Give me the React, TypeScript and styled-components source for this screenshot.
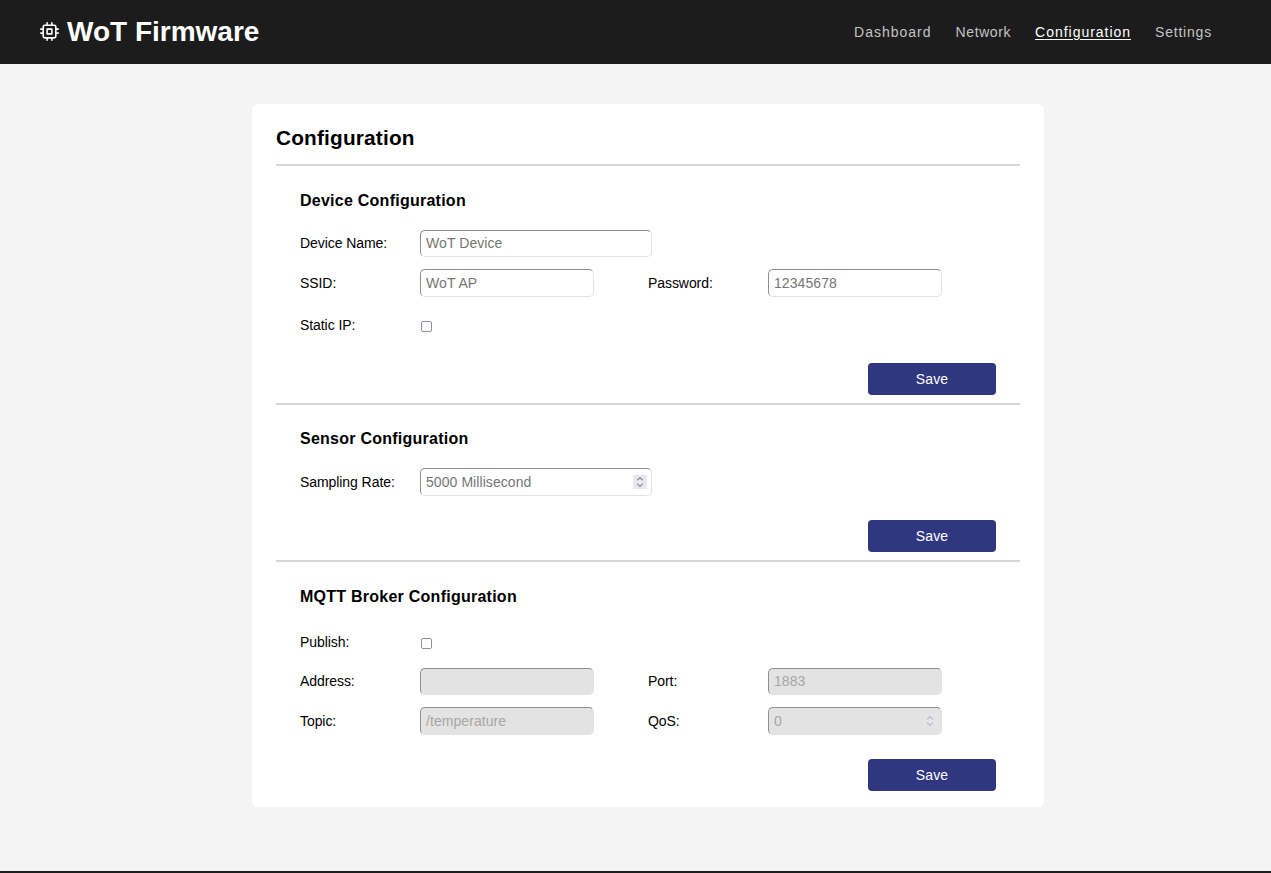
import React from "react";
import styled, { createGlobalStyle } from "styled-components";
import { FiCpu } from "react-icons/fi";

const GlobalStyle = createGlobalStyle`
  * { box-sizing: border-box; }
  body {
    margin: 0;
    background: #f4f4f4;
    font-family: "Liberation Sans", Arial, sans-serif;
    color: #000;
  }
`;

const Page = styled.div`
  height: 873px;
  overflow: hidden;
  display: flex;
  flex-direction: column;
`;

const Header = styled.header`
  height: 64px;
  flex: none;
  display: flex;
  align-items: center;
  justify-content: space-between;
  padding: 0 59px 0 40px;
  background: #1c1c1c;
  color: #fff;
`;

const Brand = styled.div`
  display: flex;
  align-items: center;
  gap: 8px;
  font-size: 28px;
  font-weight: 700;
  line-height: 32px;

  svg {
    margin-bottom: 1px;
  }
`;

const Nav = styled.nav`
  display: flex;
  gap: 24px;
`;

const NavLink = styled.a<{ $active?: boolean; $tracking: number }>`
  font-size: 14px;
  letter-spacing: ${(p) => p.$tracking}px;
  line-height: 17px;
  color: ${(p) => (p.$active ? "#fff" : "#c4c4c4")};
  text-decoration: ${(p) => (p.$active ? "underline" : "none")};
  text-underline-offset: 2px;
`;

const Card = styled.main`
  width: 792px;
  height: 703px;
  flex: none;
  margin: 40px 0 64px 252px;
  padding: 0 24px;
  border-radius: 6px;
  background: #fff;
`;

const Title = styled.h1`
  margin: 0;
  height: 60px;
  padding-top: 21px;
  font-size: 20.8px;
  letter-spacing: 0.18px;
  line-height: 26px;
`;

const Section = styled.section<{ $height: number }>`
  height: ${(p) => p.$height}px;
  padding: 24px 24px 0;
  border-top: 2px solid #d6d6d6;
  display: flex;
  flex-direction: column;
`;

const Heading = styled.h2<{ $drop?: number }>`
  margin: 0;
  height: 20px;
  padding-top: ${(p) => p.$drop ?? 0}px;
  font-size: 16px;
  letter-spacing: 0.25px;
  line-height: 20px;
`;

const Row = styled.div<{ $top: number; $height?: number }>`
  display: flex;
  align-items: center;
  flex: none;
  height: ${(p) => p.$height ?? 28}px;
  margin-top: ${(p) => p.$top}px;
`;

const Field = styled.label`
  display: flex;
  align-items: center;
  width: 348px;
  height: 100%;
  font-size: 14px;
  line-height: 17px;
`;

const Label = styled.span`
  width: 120px;
  flex: none;
  letter-spacing: -0.07px;
`;

const Box = styled.span<{ $wide?: boolean; $disabled?: boolean }>`
  display: flex;
  align-items: center;
  flex: none;
  width: ${(p) => (p.$wide ? 232 : 174)}px;
  height: 100%;
  padding: 0 4px 0 5px;
  border: 1px solid;
  border-color: #8f8f8f #e3e3e3 #e3e3e3 #8f8f8f;
  border-radius: 5px;
  background: ${(p) => (p.$disabled ? "#e3e3e3" : "#fff")};
  --hint: ${(p) => (p.$disabled ? "#a6a6a6" : "#757575")};
`;

const Input = styled.input`
  flex: 1;
  min-width: 0;
  height: 17px;
  padding: 0;
  border: 0;
  outline: 0;
  background: transparent;
  font: inherit;
  letter-spacing: 0.07px;
  &::placeholder { color: var(--hint); opacity: 1; }
`;

const Spinner = styled.span<{ $disabled?: boolean }>`
  display: flex;
  width: 14px;
  height: 14px;
  background: ${(p) => (p.$disabled ? "#e5e5e8" : "#e9e9ed")};
  color: ${(p) => (p.$disabled ? "#bcbcc0" : "#8f8f96")};
`;

const Check = styled.input`
  appearance: none;
  width: 11px;
  height: 11px;
  margin: 2px 0 0 1px;
  border: 1px solid #8f8f9d;
  border-radius: 2px;
  background: #fff;
`;

const Save = styled.button`
  align-self: flex-end;
  flex: none;
  width: 128px;
  height: 32px;
  margin-top: 24px;
  padding: 0;
  border: 0;
  border-radius: 4px;
  background: #303781;
  color: #fff;
  font: 14px "Liberation Sans", Arial, sans-serif;
  letter-spacing: 0.1px;
`;

const Footer = styled.footer`
  height: 2px;
  flex: none;
  background: #1c1c1c;
`;

type TextFieldProps = {
  label: string;
  hint?: string;
  wide?: boolean;
  disabled?: boolean;
  stepper?: boolean;
};

const TextField = ({ label, hint = "", wide, disabled, stepper }: TextFieldProps) => (
  <Field>
    <Label>{label}</Label>
    <Box $wide={wide} $disabled={disabled}>
      <Input placeholder={hint} disabled={disabled} />
      {stepper && (
        <Spinner $disabled={disabled}>
          <svg width="14" height="14" viewBox="0 0 14 14" fill="none" stroke="currentColor" strokeWidth="1.4">
            <path d="M4.2 5.2 7 2.6l2.8 2.6M4.2 8.8 7 11.4l2.8-2.6" />
          </svg>
        </Spinner>
      )}
    </Box>
  </Field>
);

const CheckField = ({ label }: { label: string }) => (
  <Field>
    <Label>{label}</Label>
    <Check type="checkbox" />
  </Field>
);

export default function App() {
  return (
    <Page>
      <GlobalStyle />
      <Header>
        <Brand>
          <FiCpu size={19} />
          WoT Firmware
        </Brand>
        <Nav>
          <NavLink $tracking={1}>Dashboard</NavLink>
          <NavLink $tracking={0.6}>Network</NavLink>
          <NavLink $active $tracking={0.97}>Configuration</NavLink>
          <NavLink $tracking={0.8}>Settings</NavLink>
        </Nav>
      </Header>
      <Card>
        <Title>Configuration</Title>
        <Section $height={239}>
          <Heading $drop={1}>Device Configuration</Heading>
          <Row $top={20} $height={27}>
            <TextField label="Device Name:" hint="WoT Device" wide />
          </Row>
          <Row $top={12}>
            <TextField label="SSID:" hint="WoT AP" />
            <TextField label="Password:" hint="12345678" />
          </Row>
          <Row $top={14}>
            <CheckField label="Static IP:" />
          </Row>
          <Save>Save</Save>
        </Section>
        <Section $height={157}>
          <Heading>Sensor Configuration</Heading>
          <Row $top={19}>
            <TextField label="Sampling Rate:" hint="5000 Millisecond" wide stepper />
          </Row>
          <Save>Save</Save>
        </Section>
        <Section $height={247}>
          <Heading $drop={1}>MQTT Broker Configuration</Heading>
          <Row $top={22}>
            <CheckField label="Publish:" />
          </Row>
          <Row $top={12} $height={27}>
            <TextField label="Address:" disabled />
            <TextField label="Port:" hint="1883" disabled />
          </Row>
          <Row $top={12}>
            <TextField label="Topic:" hint="/temperature" disabled />
            <TextField label="QoS:" hint="0" disabled stepper />
          </Row>
          <Save>Save</Save>
        </Section>
      </Card>
      <Footer />
    </Page>
  );
}
